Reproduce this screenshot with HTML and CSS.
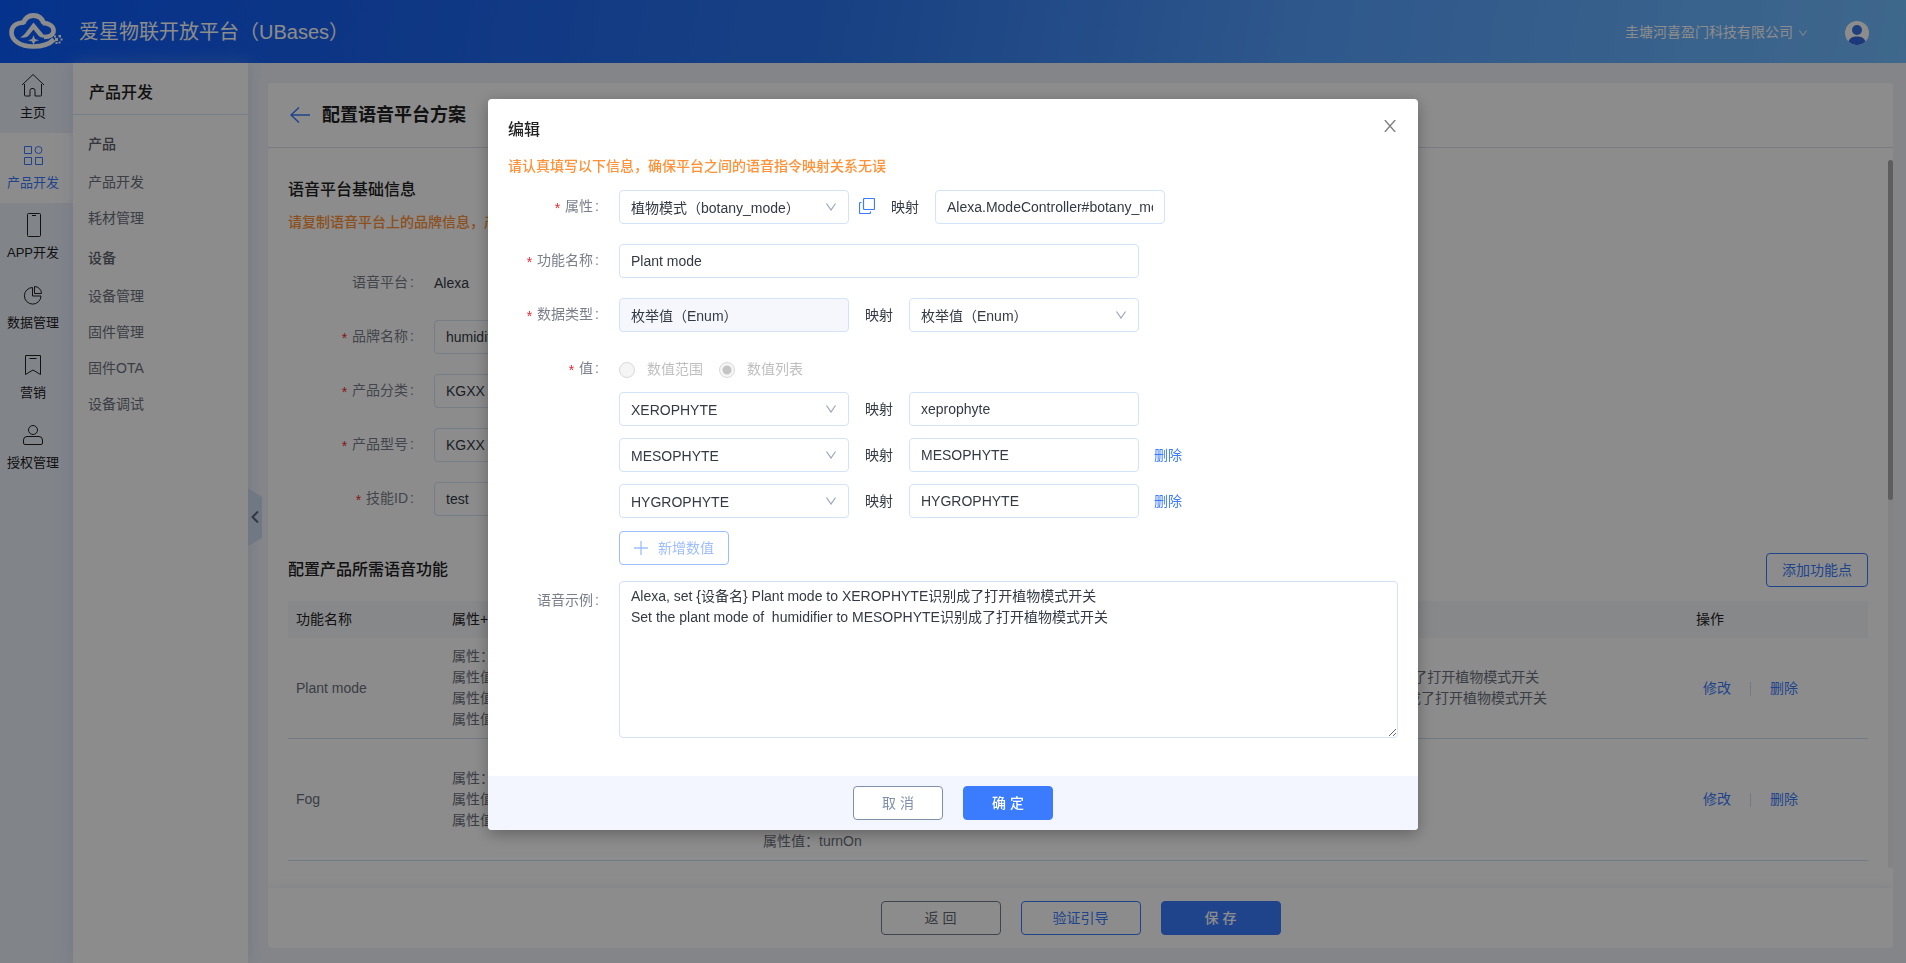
FILE: index.html
```html
<!DOCTYPE html>
<html lang="zh-CN">
<head>
<meta charset="utf-8">
<title>爱星物联开放平台（UBases）</title>
<link rel="stylesheet" href="styles.css">
</head>
<body>
<div class="app">
  <header class="topbar">
    <svg class="logo" viewBox="0 0 54 36" aria-hidden="true">
      <path fill="none" stroke="#fff" stroke-width="5" d="M14 10.500C16 5 20 2.500 24.500 2.500S33 5 35 10.500"/>
      <path fill="none" stroke="#fff" stroke-width="4.600" d="M15.500 9.500C6 9.500 2.500 14 2.500 19.500C2.500 27 11 33.500 24 33.500C33 33.500 40 31.500 45 26.500"/>
      <path fill="none" stroke="#fff" stroke-width="4.600" d="M33.500 10C40 10 44.600 13 44.600 17.500C44.600 21.500 41 24 35 24"/>
      <path fill="#fff" d="M24.500 9.500L37 24.500C33 25 30.500 24.300 28.500 21.500L24.500 16.500L20.500 21.500C18.500 24.300 16 25 11 24.500C15 22.500 16.500 20 24.500 9.500Z"/>
      <path fill="#fff" d="M24.500 22.300L26 26L30 27.300L26 28.500L24.500 32L23 28.500L19 27.300L23 26Z"/>
      <path fill="#fff" d="M46 25h3v3h-3zM49.500 22h2.500v2.500h-2.500zM51.500 25.500h2v2h-2zM46.500 29h2v2h-2zM49.500 28.500h2v2h-2zM45 22.500h2v2h-2z"/>
    </svg>
    <h1 class="brand">爱星物联开放平台（UBases）</h1>
    <button class="company" type="button">圭塘河喜盈门科技有限公司
      <svg viewBox="0 0 8 8" width="8" height="8" aria-hidden="true"><path fill="none" stroke="#fff" d="M.5 1.500L4 6.500L7.500 1.500"/></svg>
    </button>
    <svg class="avatar" viewBox="0 0 24 24" aria-hidden="true">
      <circle cx="12" cy="12" r="12" fill="#fff"/>
      <circle cx="12" cy="9" r="5" fill="#3a75e8"/>
      <path fill="#3468e0" d="M3.500 20.500C5 16.500 8 15.500 12 15.500s7 1 8.500 5A12 12 0 0 1 3.500 20.500Z"/>
    </svg>
  </header>

  <div class="workspace">
    <nav class="rail" aria-label="主导航">
      <a class="rail-item" href="#"><svg viewBox="0 0 24 24"><path d="M3.500 11V22a1 1 0 0 0 1 1H9v-5.500a2 2 0 0 1 2-2h1a2 2 0 0 1 2 2V23h5.500a1 1 0 0 0 1-1V11M1 12L12 1.500l11 10.500"/></svg>主页</a>
      <a class="rail-item is-active" href="#"><svg viewBox="0 0 24 24"><path d="M3.500 3.500h7v7h-7zM3.500 14.500h7v7h-7zM14.500 14.500h7v7h-7z"/><circle cx="17.500" cy="7" r="3.500"/></svg>产品开发</a>
      <a class="rail-item" href="#"><svg viewBox="0 0 24 24"><rect x="6.500" y=".5" width="13" height="23" rx="1"/><path d="M11 2.500h4"/></svg>APP开发</a>
      <a class="rail-item" href="#"><svg viewBox="0 0 24 24"><path d="M11.500 4.500a8.300 8.300 0 1 0 8.500 8.500h-8.500zM13.500 3.500V10.500h7a7 7 0 0 0-7-7z"/></svg>数据管理</a>
      <a class="rail-item" href="#"><svg viewBox="0 0 24 24"><path d="M4.500 2.500h15v19L12 17l-7.500 4.500zM8.500 5.500h7"/></svg>营销</a>
      <a class="rail-item" href="#"><svg viewBox="0 0 24 24"><circle cx="12" cy="7" r="4.500"/><path d="M2.500 20v-3a3.500 3.500 0 0 1 3.500-3.500h12a3.500 3.500 0 0 1 3.500 3.500v3a1.500 1.500 0 0 1-1.500 1.500H4A1.500 1.500 0 0 1 2.500 20z"/></svg>授权管理</a>
    </nav>

    <aside class="submenu">
      <h2 class="submenu-title">产品开发</h2>
      <nav class="submenu-list" aria-label="产品开发">
        <h3 class="submenu-group">产品</h3>
        <a href="#">产品开发</a>
        <a href="#">耗材管理</a>
        <h3 class="submenu-group">设备</h3>
        <a href="#">设备管理</a>
        <a href="#">固件管理</a>
        <a href="#">固件OTA</a>
        <a href="#">设备调试</a>
      </nav>
      <button class="collapse" type="button" aria-label="收起菜单"><svg viewBox="0 0 8 12" width="8" height="12"><path fill="none" stroke="#5c6678" stroke-width="2" d="M7 .5L1.500 6L7 11.500"/></svg></button>
    </aside>

    <main class="content">
      <section class="card">
        <header class="card-head">
          <a class="back" href="#" aria-label="返回"><svg viewBox="0 0 20 16" width="20" height="16"><path fill="none" stroke="#3b7cff" stroke-width="1.500" d="M20 8H1M9 .5L1 8l8 7.500"/></svg></a>
          <h2 class="card-title">配置语音平台方案</h2>
        </header>
        <div class="card-body">
          <h3 class="section-title">语音平台基础信息</h3>
          <p class="tip">请复制语音平台上的品牌信息，产品信息</p>
          <form class="base-form">
            <div class="row"><span class="label">语音平台</span><span class="static">Alexa</span></div>
            <div class="row"><label class="label required" for="brand">品牌名称</label><input class="control" id="brand" value="humidifier"></div>
            <div class="row"><label class="label required" for="category">产品分类</label><input class="control" id="category" value="KGXX"></div>
            <div class="row"><label class="label required" for="model">产品型号</label><input class="control" id="model" value="KGXX"></div>
            <div class="row"><label class="label required" for="skill">技能ID</label><input class="control" id="skill" value="test"></div>
          </form>
          <div class="section-bar">
            <h3 class="section-title">配置产品所需语音功能</h3>
            <button class="btn btn-outline" type="button">添加功能点</button>
          </div>
          <table class="table">
            <colgroup><col class="col-name"><col class="col-attr"><col class="col-attr"><col><col class="col-action"></colgroup>
            <thead><tr><th>功能名称</th><th>属性+属性值</th><th>映射</th><th>语音示例</th><th>操作</th></tr></thead>
            <tbody>
              <tr>
                <td>Plant mode</td>
                <td>属性：botany_mode<br>属性值：XEROPHYTE<br>属性值：MESOPHYTE<br>属性值：HYGROPHYTE</td>
                <td>属性：Alexa.ModeController<br>属性值：xeprophyte<br>属性值：MESOPHYTE<br>属性值：HYGROPHYTE</td>
                <td>Alexa, set {设备名} Plant mode to XEROPHYTE识别成了打开植物模式开关<br>Set the plant mode of humidifier to MESOPHYTE识别成了打开植物模式开关</td>
                <td><div class="actions"><a href="#">修改</a><a href="#">删除</a></div></td>
              </tr>
              <tr>
                <td>Fog</td>
                <td>属性：fog<br>属性值：0<br>属性值：1</td>
                <td>属性：Alexa.ToggleController<br>属性值：off<br>属性值：on<br>属性值：turnOff<br>属性值：turnOn</td>
                <td>Alexa, turn on Fog</td>
                <td><div class="actions"><a href="#">修改</a><a href="#">删除</a></div></td>
              </tr>
            </tbody>
          </table>
          <div class="scroll-track"><div class="scroll-thumb"></div></div>
        </div>
        <footer class="card-foot">
          <button class="btn btn-wide btn-dark" type="button">返 回</button>
          <button class="btn btn-wide btn-outline" type="button">验证引导</button>
          <button class="btn btn-wide btn-primary" type="button">保 存</button>
        </footer>
      </section>
    </main>
  </div>
</div>

<div class="mask">
  <div class="modal" role="dialog" aria-modal="true" aria-labelledby="modal-title">
    <button class="close" type="button" aria-label="关闭"><svg viewBox="0 0 12 12" width="12" height="12"><path fill="none" stroke="#808080" stroke-width="1.400" d="M.8 0L11.200 12M11.200 0L.8 12"/></svg></button>
    <form class="modal-body">
      <h2 class="modal-title" id="modal-title">编辑</h2>
      <p class="tip">请认真填写以下信息，确保平台之间的语音指令映射关系无误</p>
      <div class="row">
        <label class="label required" for="attr">属性</label>
        <span class="select"><select class="control" id="attr"><option>植物模式（botany_mode）</option></select><svg viewBox="0 0 10 8"><path d="M.5 .5L5 7L9.500 .5"/></svg></span>
        <button class="copy" type="button" aria-label="复制"><svg viewBox="0 0 16 16" width="16" height="16"><rect x="4.500" y=".5" width="11" height="11" rx="1"/><path d="M2.500 4.500h-1a1 1 0 0 0-1 1v9a1 1 0 0 0 1 1h9a1 1 0 0 0 1-1v-1"/></svg></button>
        <label class="map" for="attr-map">映射</label>
        <input class="control" id="attr-map" value="Alexa.ModeController#botany_mode">
      </div>
      <div class="row">
        <label class="label required" for="func">功能名称</label>
        <input class="control control-long" id="func" value="Plant mode">
      </div>
      <div class="row">
        <label class="label required" for="dtype">数据类型</label>
        <input class="control" id="dtype" value="枚举值（Enum）" disabled>
        <label class="map" for="dtype-map">映射</label>
        <span class="select"><select class="control" id="dtype-map"><option>枚举值（Enum）</option></select><svg viewBox="0 0 10 8"><path d="M.5 .5L5 7L9.500 .5"/></svg></span>
      </div>
      <div class="row">
        <span class="label required">值</span>
        <div class="values">
          <div class="radios">
            <label class="radio"><input type="radio" name="kind" disabled>数值范围</label>
            <label class="radio"><input type="radio" name="kind" disabled checked>数值列表</label>
          </div>
          <div class="pair">
            <span class="select"><select class="control" id="v1" aria-label="值 1"><option>XEROPHYTE</option></select><svg viewBox="0 0 10 8"><path d="M.5 .5L5 7L9.500 .5"/></svg></span>
            <label class="map" for="m1">映射</label>
            <input class="control" id="m1" value="xeprophyte">
          </div>
          <div class="pair">
            <span class="select"><select class="control" id="v2" aria-label="值 2"><option>MESOPHYTE</option></select><svg viewBox="0 0 10 8"><path d="M.5 .5L5 7L9.500 .5"/></svg></span>
            <label class="map" for="m2">映射</label>
            <input class="control" id="m2" value="MESOPHYTE">
            <a class="remove" href="#">删除</a>
          </div>
          <div class="pair">
            <span class="select"><select class="control" id="v3" aria-label="值 3"><option>HYGROPHYTE</option></select><svg viewBox="0 0 10 8"><path d="M.5 .5L5 7L9.500 .5"/></svg></span>
            <label class="map" for="m3">映射</label>
            <input class="control" id="m3" value="HYGROPHYTE">
            <a class="remove" href="#">删除</a>
          </div>
          <button class="btn btn-add" type="button"><svg viewBox="0 0 14 14" width="14" height="14"><path stroke="currentColor" stroke-width="1.300" d="M7 0v14M0 7h14"/></svg>新增数值</button>
        </div>
      </div>
      <div class="row row-example">
        <label class="label" for="example">语音示例</label>
        <textarea class="control example" id="example">Alexa, set {设备名} Plant mode to XEROPHYTE识别成了打开植物模式开关
Set the plant mode of  humidifier to MESOPHYTE识别成了打开植物模式开关</textarea>
      </div>
    </form>
    <footer class="modal-foot">
      <button class="btn btn-mid btn-cancel" type="button">取 消</button>
      <button class="btn btn-mid btn-primary" type="button">确 定</button>
    </footer>
  </div>
</div>
</body>
</html>
```
FILE: styles.css
```css
* { box-sizing: border-box; }
html, body { height: 100%; }
body {
  margin: 0;
  overflow: hidden;
  color: #333a44;
  font: 14px/21px "Liberation Sans", "Noto Sans CJK SC", sans-serif;
}
h1, h2, h3, p { margin: 0; font-weight: 500; }
a { color: #3b7cff; text-decoration: none; }
button, input, select, textarea { font: inherit; color: inherit; margin: 0; }
button { cursor: pointer; background: none; border: 0; padding: 0; }
svg { display: block; flex: none; }

.app { display: flex; flex-direction: column; height: 100vh; }

/* Top bar */
.topbar {
  display: flex;
  align-items: center;
  height: 63px;
  padding: 0 37px 0 9px;
  background: linear-gradient(100deg, #0a5cff 0%, #1a63f0 20%, #2d78f0 45%, #559fff 68%, #73bdff 100%);
  color: #fff;
}
.logo { width: 54px; height: 36px; margin: 0 16px 2px 0; }
.brand { font-size: 20px; line-height: 28px; font-weight: 400; flex: 1; }
.company { display: flex; align-items: center; gap: 6px; padding-top: 2px; }
.avatar { width: 24px; height: 24px; margin: 2px 0 0 38px; }

.workspace { display: flex; flex: 1; min-height: 0; background: #f0f3fa; }

/* Icon rail */
.rail { width: 73px; background: #ebf0fa; }
.rail-item {
  display: flex;
  flex-direction: column;
  align-items: center;
  gap: 7px;
  height: 70px;
  padding: 10px 7px 0 0;
  color: #222;
  font-size: 13px;
  line-height: 18px;
  white-space: nowrap;
}
.rail-item svg { width: 24px; height: 24px; fill: none; stroke: currentColor; stroke-width: 1; }
.rail-item.is-active { background: #fff; color: #3b7cff; }

/* Second level menu */
.submenu {
  position: relative;
  width: 175px;
  background: #fff;
  box-shadow: 0 0 16px rgba(160, 185, 230, .4);
}
.submenu-title {
  height: 52px;
  padding: 0 16px;
  border-bottom: 1px solid #d5e3f9;
  color: #222;
  font-size: 16px;
  line-height: 60px;
}
.submenu-list { display: flex; flex-direction: column; padding: 9px 15px; line-height: 36px; }
.submenu-list a { color: #6c717c; }
.submenu-list a + .submenu-group { margin-top: 2px; }
.submenu-group { font-size: 14px; line-height: 40px; color: #5c616b; }
.collapse {
  position: absolute;
  left: 100%;
  top: 50%;
  width: 14px;
  height: 58px;
  margin-top: -25px;
  padding-left: 3px;
  background: #cddaf0;
  clip-path: polygon(0 0, 100% 9px, 100% 50px, 0 100%);
}

/* Content card */
.content { flex: 1; min-width: 0; padding: 20px 13px 15px 20px; }
.card { display: flex; flex-direction: column; height: 100%; background: #fff; border-radius: 4px; overflow: hidden; }
.card-head {
  display: flex;
  align-items: center;
  gap: 12px;
  height: 65px;
  padding: 0 22px;
  border-bottom: 1px solid #dce0ec;
}
.card-title { color: #222; font-size: 18px; line-height: 26px; font-weight: 700; }
.card-body { position: relative; flex: 1; min-height: 0; overflow: hidden; padding: 30px 25px 0 20px; }
.section-title { color: #222; font-size: 16px; line-height: 24px; }
.tip { color: #ff9138; line-height: 22px; }
.card-body .tip { margin-top: 9px; }
.base-form { display: flex; flex-direction: column; gap: 20px; margin: 33px 0 37px; }
.base-form .label { width: 134px; }
.static { line-height: 34px; }
.section-bar { display: flex; justify-content: space-between; align-items: center; margin-bottom: 14px; }

.table { width: 100%; border-collapse: collapse; table-layout: fixed; color: #6c717c; }
.col-name { width: 156px; }
.col-attr { width: 311px; }
.col-action { width: 180px; }
.table th, .table td { padding: 8px; text-align: left; }
.table th { background: #f6f7fb; color: #222; font-weight: 400; }
.table td { border-bottom: 1px solid #cfdef7; }
.actions { display: flex; padding-left: 7px; }
.actions a + a::before {
  content: "";
  display: inline-block;
  height: 14px;
  margin: 0 19px;
  border-left: 1px solid #cfdef7;
  vertical-align: middle;
}
.scroll-track {
  position: absolute;
  top: 12px;
  right: 0;
  bottom: 20px;
  width: 5px;
  border-radius: 3px;
  background: #eeeeee;
}
.scroll-thumb { height: 48%; border-radius: 3px; background: #aaaaaa; }
.card-foot {
  display: flex;
  justify-content: center;
  align-items: center;
  gap: 20px;
  height: 60px;
  box-shadow: 0 0 10px #e8ebf2;
}

/* Form parts */
.row { display: flex; align-items: flex-start; }
.label {
  display: flex;
  justify-content: flex-end;
  flex: none;
  margin-right: 12px;
  color: #7a7f8a;
  line-height: 32px;
}
.label::after { content: ":"; margin: 0 8px 0 2px; }
.label.required::before { content: "*"; margin-right: 5px; padding-top: 4px; line-height: 28px; color: #f5222d; }
.control {
  display: block;
  width: 230px;
  height: 34px;
  padding: 4px 11px;
  border: 1px solid #d5e3f9;
  border-radius: 4px;
  outline: 0;
  background: #fff;
}
.control:disabled { background: #f5f7fd; color: inherit; }
.select { position: relative; }
.select .control { appearance: none; padding-top: 6px; }
.select svg {
  position: absolute;
  right: 13px;
  top: 13px;
  width: 10px;
  height: 8px;
  fill: none;
  stroke: #98a5ba;
  stroke-width: 1.2;
  pointer-events: none;
}

.btn {
  display: flex;
  align-items: center;
  justify-content: center;
  height: 34px;
  padding: 0 15px;
  border: 1px solid;
  border-radius: 4px;
  background: #fff;
  white-space: nowrap;
}
.btn-wide { width: 120px; }
.btn-mid { width: 90px; }
.btn-outline { border-color: #3b7cff; color: #3b7cff; }
.btn-dark { border-color: #747f91; color: #646a75; }
.btn-cancel { border-color: #8090ab; color: #8090ab; }
.btn-primary { border-color: #3b7cff; background: #3b7cff; color: #fff; font-weight: 500; }
.btn-add { gap: 10px; width: 110px; margin-top: 1px; padding: 0; border-color: #9dbdff; color: #9dbdff; }

/* Edit dialog */
.mask {
  position: fixed;
  inset: 0;
  padding-top: 99px;
  background: rgba(0, 0, 0, .45);
}
.modal {
  position: relative;
  width: 930px;
  max-width: 100%;
  margin: 0 auto;
  border-radius: 4px;
  overflow: hidden;
  background: #fff;
  box-shadow: 0 4px 16px rgba(0, 0, 0, .3);
}
.close { position: absolute; top: 21px; right: 22px; }
.modal-body { display: flex; flex-direction: column; gap: 20px; padding: 19px 20px 38px; }
.modal-title { color: #222; font-size: 16px; line-height: 24px; }
.modal-body .tip { margin: -7px 0; }
.modal-body .label { width: 99px; }
.control-long { width: 520px; }
.map { padding: 0 16px; line-height: 34px; }
.copy { margin: 8px 0 0 10px; }
.copy svg { fill: none; stroke: #3b7cff; stroke-width: 1.2; }
.values { display: flex; flex-direction: column; gap: 12px; }
.radios { display: flex; gap: 16px; height: 28px; align-items: flex-end; line-height: 21px; }
.radio { display: flex; align-items: center; gap: 12px; color: #bfbfbf; }
.radio input {
  appearance: none;
  width: 16px;
  height: 16px;
  border: 1px solid #d9d9d9;
  border-radius: 50%;
  background: #f5f5f5;
}
.radio input:checked { background: radial-gradient(circle, #c4c4c4 4px, #f5f5f5 5px); }
.pair { display: flex; }
.remove { margin-left: 15px; line-height: 34px; }
.row-example { margin-top: -4px; }
.row-example .label { line-height: 38px; }
.example { flex: 1; height: 157px; resize: vertical; }
.modal-foot {
  display: flex;
  justify-content: center;
  gap: 20px;
  padding: 10px;
  background: #f3f6fe;
}
```
